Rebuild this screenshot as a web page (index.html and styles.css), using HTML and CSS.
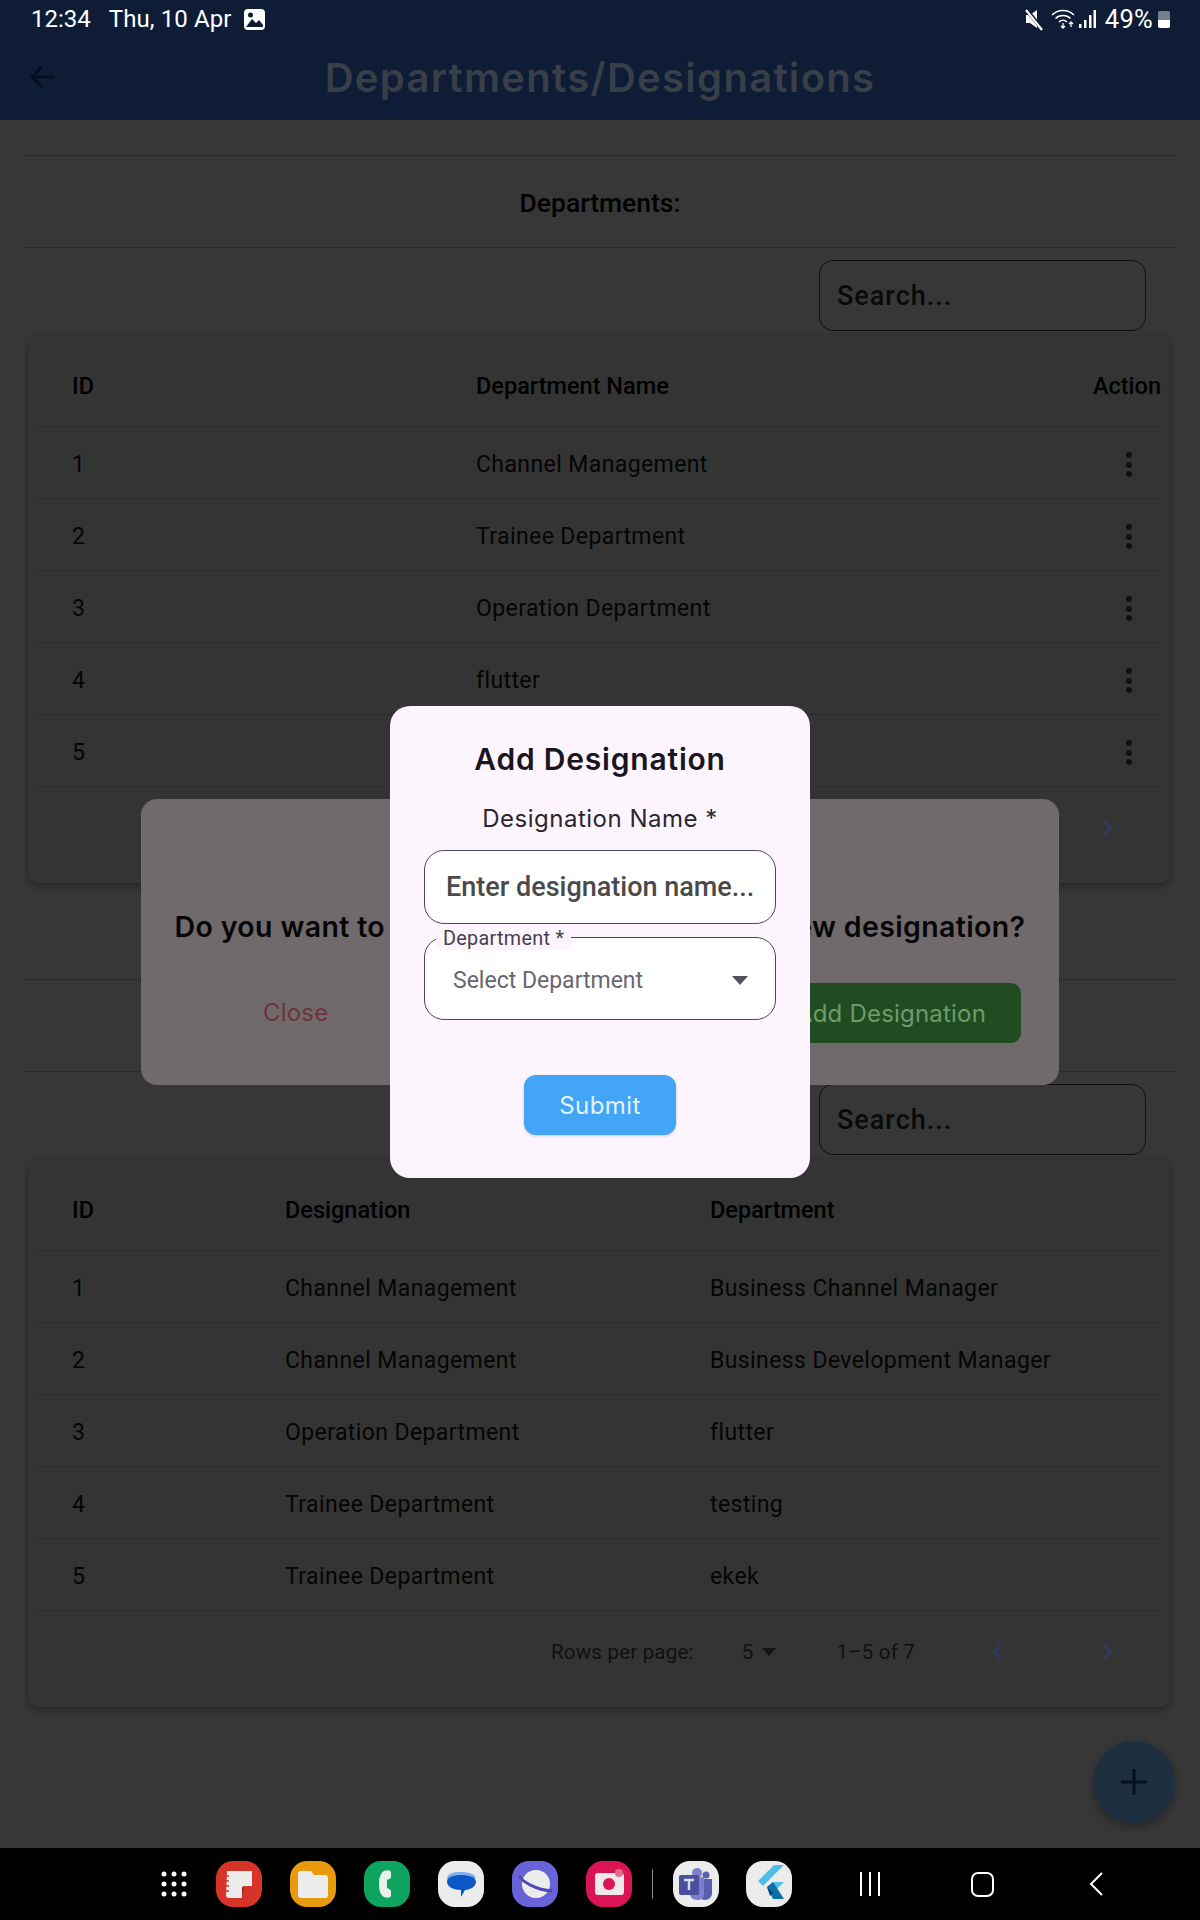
FILE: index.html
```html
<!DOCTYPE html>
<html lang="en">
<head>
<meta charset="utf-8">
<title>Departments/Designations</title>
<link rel="stylesheet" href="styles.css">
</head>
<body>
<div class="screen">
  <header class="topbar">
    <div class="status">
      <span class="clock">12:34</span>
      <span class="date">Thu, 10 Apr</span>
      <svg class="pic" viewBox="0 0 21 21"><rect width="21" height="21" rx="4" fill="#fff"/><path d="M2 18l6-8 4 4 3-3 4 5v2H2z" fill="#0e1c36"/><circle cx="6.5" cy="6" r="2.500" fill="#0e1c36"/></svg>
      <span class="status-gap"></span>
      <svg class="mute" viewBox="0 0 18 24"><path d="M1 8h4l7-5v18l-7-5H1z" fill="#fff"/><path d="M1 2l16 20" stroke="#0e1c36" stroke-width="4"/><path d="M1 3l16 20" stroke="#fff" stroke-width="2.200"/></svg>
      <svg class="wifi" viewBox="0 0 24 20" fill="none" stroke="#fff" stroke-width="1.500"><path d="M1 6c6-6 16-6 22 0"/><path d="M4.500 9.500c4-4 11-4 15 0"/><path d="M8 13c2.500-2.500 5.500-2.500 8 0"/><path d="M12 14v5M10 17l2 2 2-2M20 13v5M18 15l2-2 2 2" stroke-width="1.300"/></svg>
      <svg class="signal" viewBox="0 0 17 18" fill="#fff"><rect x="0" y="14" width="2.500" height="4"/><rect x="5" y="10" width="2.500" height="8"/><rect x="10" y="5" width="2.500" height="13"/><rect x="14.500" y="0" width="2.500" height="18"/></svg>
      <span class="pct">49%</span>
      <span class="battery"><span class="battery-fill"></span></span>
    </div>
    <div class="appbar">
      <svg class="back" viewBox="0 0 26 24" fill="none" stroke="#050c1e" stroke-width="2.600"><path d="M26 12H3M13 2L3 12l10 10"/></svg>
      <h1 class="title">Departments/Designations</h1>
    </div>
  </header>

  <main class="content">
    <section class="section first">
      <h2 class="heading">Departments:</h2>
      <div class="search-row"><div class="search">Search...</div></div>
      <div class="card">
        <div class="row head dept"><span>ID</span><span>Department Name</span><span class="right">Action</span></div>
        <div class="row dept"><span>1</span><span>Channel Management</span><span class="dots"><i></i><i></i><i></i></span></div>
        <div class="row dept"><span>2</span><span>Trainee Department</span><span class="dots"><i></i><i></i><i></i></span></div>
        <div class="row dept"><span>3</span><span>Operation Department</span><span class="dots"><i></i><i></i><i></i></span></div>
        <div class="row dept"><span>4</span><span>flutter</span><span class="dots"><i></i><i></i><i></i></span></div>
        <div class="row dept"><span>5</span><span>Testing</span><span class="dots"><i></i><i></i><i></i></span></div>
        <div class="pager">
          <span>Rows per page:</span><span class="rows">5</span><span class="caret"></span><span class="range">1–5 of 5</span>
          <svg class="chev" viewBox="0 0 12 20" fill="none" stroke="#33395a" stroke-width="3"><path d="M10 2L2 10l8 8"/></svg>
          <svg class="chev" viewBox="0 0 12 20" fill="none" stroke="#33395a" stroke-width="3"><path d="M2 2l8 8-8 8"/></svg>
        </div>
      </div>
    </section>

    <section class="section second">
      <h2 class="heading">Designations:</h2>
      <div class="search-row"><div class="search">Search...</div></div>
      <div class="card">
        <div class="row head desig"><span>ID</span><span>Designation</span><span>Department</span></div>
        <div class="row desig"><span>1</span><span>Channel Management</span><span>Business Channel Manager</span></div>
        <div class="row desig"><span>2</span><span>Channel Management</span><span>Business Development Manager</span></div>
        <div class="row desig"><span>3</span><span>Operation Department</span><span>flutter</span></div>
        <div class="row desig"><span>4</span><span>Trainee Department</span><span>testing</span></div>
        <div class="row desig"><span>5</span><span>Trainee Department</span><span>ekek</span></div>
        <div class="pager">
          <span>Rows per page:</span><span class="rows">5</span><span class="caret"></span><span class="range">1–5 of 7</span>
          <svg class="chev" viewBox="0 0 12 20" fill="none" stroke="#33395a" stroke-width="3"><path d="M10 2L2 10l8 8"/></svg>
          <svg class="chev" viewBox="0 0 12 20" fill="none" stroke="#33395a" stroke-width="3"><path d="M2 2l8 8-8 8"/></svg>
        </div>
      </div>
    </section>

    <div class="fab"><svg viewBox="0 0 28 28" stroke="#061020" stroke-width="3"><path d="M14 1v26M1 14h26"/></svg></div>
  </main>

  <footer class="dock">
    <svg class="apps" viewBox="0 0 26 26" fill="#fff"><circle cx="3" cy="3" r="2.500"/><circle cx="13" cy="3" r="2.500"/><circle cx="23" cy="3" r="2.500"/><circle cx="3" cy="13" r="2.500"/><circle cx="13" cy="13" r="2.500"/><circle cx="23" cy="13" r="2.500"/><circle cx="3" cy="23" r="2.500"/><circle cx="13" cy="23" r="2.500"/><circle cx="23" cy="23" r="2.500"/></svg>
    <div class="tray">
      <svg class="app" viewBox="0 0 46 46"><rect width="46" height="46" rx="17" fill="#d63426"/><path d="M11 10h25v15h-7c-2 0-3 1-3 3v9H13c-2 0-3-1-3-3z" fill="#ececec"/><path d="M26 37v-9c0-2 1-3 3-3h-1z" fill="#8c2018"/><path d="M9 15h4M9 20h4M9 25h4M9 30h4" stroke="#d63426" stroke-width="1.500"/></svg>
      <svg class="app" viewBox="0 0 46 46"><rect width="46" height="46" rx="17" fill="#e89a0c"/><path d="M8 13c0-2 1-3 3-3h10l3 4h11c2 0 3 1 3 3v17c0 2-1 3-3 3H11c-2 0-3-1-3-3z" fill="#ececec"/></svg>
      <svg class="app" viewBox="0 0 46 46"><rect width="46" height="46" rx="17" fill="#0ea45f"/><path d="M20 10c3-1 6-1 7 1v5c0 2-3 2-4 3v8c1 1 4 1 4 3v5c-1 2-4 2-7 1-4-2-5-8-5-13s1-11 5-13z" fill="#e8f2ec"/></svg>
      <svg class="app" viewBox="0 0 46 46"><rect width="46" height="46" rx="17" fill="#ececec"/><path d="M9 17c1-5 6-6 14-6s14 2 15 6l-28 3z" fill="#85aef0"/><path d="M9 21c0-5 6-7 14-7s15 2 15 7-7 8-11 8l-4 7v-7c-7 0-14-3-14-8z" fill="#0b57c8"/></svg>
      <svg class="app" viewBox="0 0 46 46"><rect width="46" height="46" rx="17" fill="#6a63d8"/><circle cx="24" cy="23" r="14" fill="#ececec"/><path d="M7 15c4 6 17 14 33 15" fill="none" stroke="#5048b8" stroke-width="3"/></svg>
      <svg class="app" viewBox="0 0 46 46"><rect width="46" height="46" rx="17" fill="#d91556"/><rect x="9" y="12" width="29" height="22" rx="3" fill="#f0e8ea"/><circle cx="23" cy="23" r="6" fill="#d91556"/><circle cx="33" cy="12" r="4" fill="#e06a8c"/></svg>
    </div>
    <span class="sep"></span>
    <div class="tray recent">
      <svg class="app" viewBox="0 0 46 46"><rect width="46" height="46" rx="17" fill="#ececec"/><circle cx="24" cy="12" r="5" fill="#7b7fce"/><circle cx="33" cy="14" r="3.500" fill="#5a5fb0"/><path d="M25 18h14v14c0 4-3 7-7 7s-7-3-7-7z" fill="#5a5fb0"/><path d="M17 16h14v18c0 3-3 5-7 5s-7-3-7-6z" fill="#7b7fce"/><rect x="6" y="14" width="20" height="20" rx="2" fill="#4a4f9e"/><path d="M11 19h10M16 19v10" stroke="#d8daf0" stroke-width="2.500"/></svg>
      <svg class="app" viewBox="0 0 46 46"><rect width="46" height="46" rx="17" fill="#ececec"/><path d="M28 4h10L17 25l-5-5z" fill="#50bde8"/><path d="M27 21h11L27 32l-6-6z" fill="#50bde8"/><path d="M21 26l6-5 11 17H27z" fill="#0b6fa8"/><path d="M21 26l6 6-3 3z" fill="#074a70"/></svg>
    </div>
    <div class="nav-btns">
      <svg class="nav-recents" viewBox="0 0 22 24" stroke="#fff" stroke-width="2"><path d="M2 0v24M11 0v24M20 0v24"/></svg>
      <span class="nav-home"></span>
      <svg class="nav-back" viewBox="0 0 14 24" fill="none" stroke="#fff" stroke-width="2"><path d="M13 1L2 12l11 11"/></svg>
    </div>
  </footer>

  <div class="dialog-back">
    <p class="dialog-q">Do you want to add a new department or a new designation?</p>
    <div class="dialog-actions">
      <span class="close">Close</span>
      <span class="add">Add Designation</span>
    </div>
  </div>

  <div class="modal">
    <h3 class="modal-title">Add Designation</h3>
    <p class="modal-label">Designation Name *</p>
    <div class="field">Enter designation name...</div>
    <div class="select">
      <span class="legend">Department *</span>
      <span class="placeholder">Select Department</span>
      <span class="select-caret"></span>
    </div>
    <div class="submit">Submit</div>
  </div>
</div>
</body>
</html>
```

FILE: styles.css
```css
* { box-sizing: border-box; }
html, body { margin: 0; padding: 0; }
body { background: #373737; font-family: Roboto, "Liberation Sans", sans-serif; color: #0c0c0c; }
.screen { position: relative; width: 1200px; height: 1920px; overflow: hidden; display: flex; flex-direction: column; }

.topbar { background: #0e1c36; height: 120px; flex: none; }
.status { height: 38px; padding: 0 30px 0 31px; display: flex; align-items: center; color: #fff; font-size: 24px; }
.date { margin-left: 18px; letter-spacing: 0.1px; }
.pic { width: 21px; height: 21px; margin-left: 12px; }
.status-gap { flex: 1; }
.mute { width: 18px; height: 24px; }
.wifi { width: 24px; height: 20px; margin-left: 8px; }
.signal { width: 17px; height: 18px; margin-left: 4px; }
.pct { margin-left: 9px; font-size: 25.500px; letter-spacing: 0.3px; }
.battery { width: 12px; height: 17px; margin-left: 5px; border-radius: 2px; background: #75808f; display: flex; align-items: flex-end; }
.battery-fill { display: block; width: 100%; height: 8px; background: #fff; border-radius: 0 0 2px 2px; }
.appbar { height: 82px; position: relative; display: flex; align-items: center; justify-content: center; padding-bottom: 4px; }
.back { position: absolute; left: 29px; top: 27px; width: 26px; height: 24px; }
.title { margin: 0; font-family: Inter, "Open Sans", sans-serif; font-weight: 600; font-size: 40px; letter-spacing: 1.300px; color: #383f49; }

.content { flex: 1; padding: 35px 24px 0; position: relative; }
.section.second { margin-top: 96px; }
.heading { margin: 0; height: 93px; border-top: 1px solid #2b2b2b; border-bottom: 1px solid #2b2b2b; display: flex; align-items: center; justify-content: center; font-size: 26.500px; font-weight: 500; color: #000; padding-top: 2px; }
.search-row { display: flex; justify-content: flex-end; padding: 12px 30px 0 0; }
.search { width: 327px; height: 71px; border: 1.5px solid #101010; border-radius: 14px; padding-left: 17px; display: flex; align-items: center; font-size: 27px; letter-spacing: 1px; font-weight: 500; color: #0a0a0a; }
.card { margin: 4px 6px 0 4px; background: #343434; border-radius: 10px; box-shadow: 0 3px 6px rgba(0,0,0,.35); height: 548px; padding: 0 9px 0 10px; }
.row { display: grid; height: 72px; align-items: center; padding-left: 34px; padding-top: 4px; font-size: 23px; letter-spacing: 0.4px; border-bottom: 1px solid #2c2c2c; color: #050505; }
.row.head { height: 92px; padding-top: 10px; font-size: 23.500px; font-weight: 500; color: #000; letter-spacing: 0; }
.row.dept { grid-template-columns: 404px 1fr 120px; }
.row.desig { grid-template-columns: 213px 425px 1fr; }
.right { text-align: right; }
.dots { display: flex; flex-direction: column; align-items: flex-end; gap: 3.500px; padding-right: 29px; }
.dots i { display: block; width: 6px; height: 6px; border-radius: 50%; background: #101010; }
.pager { height: 96px; display: flex; align-items: center; justify-content: flex-end; font-size: 20.500px; letter-spacing: 0.2px; color: #101010; padding-right: 48px; padding-bottom: 14px; }
.rows { margin-left: 48px; }
.caret { margin-left: 9px; border: 7px solid transparent; border-top: 8px solid #151515; border-bottom: 0; }
.range { margin-left: 60px; margin-right: 77px; }
.chev { width: 12px; height: 18px; }
.chev + .chev { margin-left: 97px; }

.fab { position: absolute; right: 25px; bottom: 25px; width: 82px; height: 82px; border-radius: 50%; background: #1e3040; box-shadow: 0 4px 8px rgba(0,0,0,.3); display: flex; align-items: center; justify-content: center; }
.fab svg { width: 28px; height: 28px; }

.dock { height: 72px; flex: none; background: #000; display: flex; align-items: center; padding-left: 161px; }
.apps { width: 26px; height: 26px; }
.tray { display: flex; gap: 28px; margin-left: 29px; }
.app { width: 46px; height: 46px; display: block; }
.sep { width: 1px; height: 30px; background: #8a8a8a; margin-left: 20px; }
.tray.recent { margin-left: 20px; gap: 27px; }
.nav-btns { display: flex; align-items: center; margin-left: 67px; }
.nav-recents { width: 22px; height: 24px; }
.nav-home { width: 23px; height: 25px; border: 2px solid #fff; border-radius: 7px; margin-left: 90px; }
.nav-back { width: 14px; height: 24px; margin-left: 95px; }

.dialog-back { position: absolute; left: 141px; top: 799px; width: 918px; height: 286px; background: #716a6d; border-radius: 16px; display: flex; flex-direction: column; align-items: center; padding-top: 110px; }
.dialog-q { margin: 0; font-family: Inter, "Open Sans", sans-serif; font-weight: 600; font-size: 28.500px; letter-spacing: 0.37px; color: #060606; white-space: nowrap; }
.dialog-actions { align-self: stretch; display: flex; align-items: center; justify-content: space-between; padding: 0 38px 0 122px; margin-top: 39px; font-family: Inter, "Open Sans", sans-serif; font-size: 24px; letter-spacing: 0.2px; }
.close { color: #6e333a; padding-bottom: 2px; }
.add { background: #204c22; color: #6c9c6c; border-radius: 10px; height: 60px; width: 260px; display: flex; align-items: center; justify-content: center; }

.modal { position: absolute; left: 390px; top: 706px; width: 420px; height: 472px; background: #fdf5fe; border-radius: 20px; display: flex; flex-direction: column; align-items: center; padding: 0 34px; }
.modal-title { margin: 32px 0 0; height: 42px; line-height: 42px; font-family: Inter, "Open Sans", sans-serif; font-weight: 600; font-size: 30px; letter-spacing: 0.8px; color: #1a1620; }
.modal-label { margin: 24px 0 0; height: 30px; line-height: 30px; font-family: Inter, "Open Sans", sans-serif; font-size: 24px; letter-spacing: 0.5px; color: #2a2630; }
.field { align-self: stretch; margin-top: 16px; height: 74px; border: 1.5px solid #4c4852; border-radius: 20px; background: #fff; display: flex; align-items: center; padding-left: 21px; font-size: 27px; font-weight: 500; color: #4a4a4a; white-space: nowrap; }
.select { position: relative; align-self: stretch; margin-top: 13px; height: 83px; border: 1.5px solid #4c4852; border-radius: 20px; background: #fff; display: flex; align-items: center; justify-content: space-between; padding: 3px 27px 0 28px; }
.legend { position: absolute; left: 11px; top: -10px; background: #fdf5fe; padding: 0 7px; font-size: 19.800px; line-height: 22px; letter-spacing: 0.3px; color: #45414c; }
.placeholder { font-size: 23px; color: #6a666e; }
.select-caret { border: 8px solid transparent; border-top: 9px solid #55515a; border-bottom: 0; }
.submit { margin-top: 55px; width: 152px; height: 60px; border-radius: 12px; background: #42a5f5; color: #e3f3ff; font-family: Inter, "Open Sans", sans-serif; font-size: 24px; letter-spacing: 0.4px; display: flex; align-items: center; justify-content: center; box-shadow: 0 1px 3px rgba(0,0,0,.2); }
```
